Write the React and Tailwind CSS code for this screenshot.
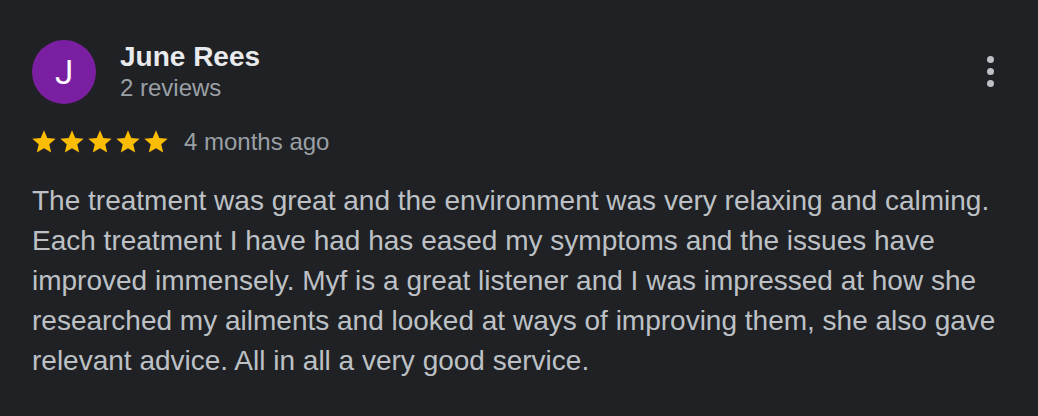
import React from 'react';

const Star = () => (
    <svg width="28" height="28" viewBox="0 0 24 24" fill="#fbbc04">
        <path d="M12 17.27L18.18 21l-1.64-7.03L22 9.24l-7.19-.61L12 2 9.19 8.63 2 9.24l5.46 4.73L5.82 21z" />
    </svg>
);

const App = () => {
    return (
        <div
            className="w-[1038px] h-[416px] bg-[#202124] pl-[32px] pr-[40px] pt-[40px] overflow-hidden"
            style={{ fontFamily: '"Liberation Sans", Arial, sans-serif' }}
        >
            <div className="flex items-start">
                <div
                    className="w-[64px] h-[64px] rounded-full bg-[#7b1fa2] flex items-center justify-center text-white text-[33px] leading-none"
                    style={{ fontFamily: 'Roboto, sans-serif' }}
                >
                    J
                </div>
                <div className="flex flex-col ml-[24px]">
                    <span className="text-[28px] leading-[33px] font-bold text-[#e8eaed]">June Rees</span>
                    <span className="text-[24px] leading-[30px] text-[#9aa0a6]">2 reviews</span>
                </div>
                <div className="ml-auto mt-[16px] mr-[4px] flex flex-col gap-[5px]">
                    <span className="w-[7px] h-[7px] rounded-full bg-[#bdc1c6]" />
                    <span className="w-[7px] h-[7px] rounded-full bg-[#bdc1c6]" />
                    <span className="w-[7px] h-[7px] rounded-full bg-[#bdc1c6]" />
                </div>
            </div>

            <div className="flex items-center h-[32px] mt-[22px] -ml-[2px]">
                <div className="flex">
                    <Star />
                    <Star />
                    <Star />
                    <Star />
                    <Star />
                </div>
                <span className="ml-[14px] text-[24px] text-[#9aa0a6]">4 months ago</span>
            </div>

            <p className="mt-[23px] text-[28px] leading-[40px] text-[#bdc1c6] max-w-[970px]">
                The treatment was great and the environment was very relaxing and calming. Each treatment I have had has eased my symptoms and the issues have improved immensely. Myf is a great listener and I was impressed at how she researched my ailments and looked at ways of improving them, she also gave relevant advice. All in all a very good service.
            </p>
        </div>
    );
};

export default App;
